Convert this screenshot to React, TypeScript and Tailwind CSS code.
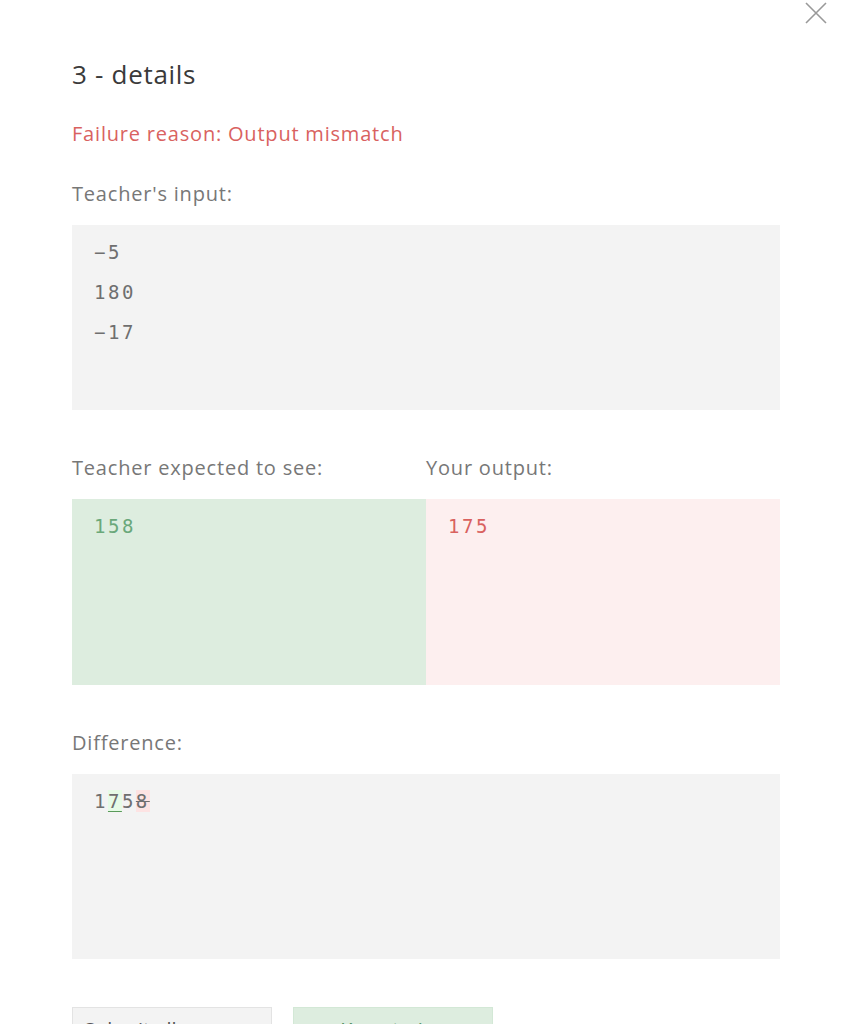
import React from 'react';

const mono = "font-['DejaVu_Sans_Mono',monospace] text-[19px] leading-[40px] tracking-[2.5px]";
const label = "text-[20px] leading-[28px] tracking-[0.8px] text-[#777]";

const App = () => {
    return (
        <div className="relative min-h-screen w-full bg-white font-['Open_Sans',sans-serif]">
            {/* Close */}
            <button className="absolute right-[20px] top-[2px] p-0 text-[#999]">
                <svg width="22" height="22" viewBox="0 0 22 22" fill="none" stroke="currentColor" strokeWidth="1.6">
                    <path d="M1 1 L21 21 M21 1 L1 21" />
                </svg>
            </button>

            <div className="ml-[72px] w-[708px] pt-[56px]">
                <h1 className="text-[26px] leading-[36px] tracking-[0.7px] text-[#3a3a3a]">3 - details</h1>

                <p className="mt-[28px] text-[20px] leading-[28px] tracking-[0.8px] text-[#d9625f]">
                    Failure reason: Output mismatch
                </p>

                <p className={`mt-[32px] ${label}`}>Teacher's input:</p>
                <div className={`mt-[17px] h-[185px] bg-[#f3f3f3] px-[22px] pt-[7px] text-[#6f6f6f] ${mono}`}>
                    <div>−5</div>
                    <div>180</div>
                    <div>−17</div>
                </div>

                {/* Expected / actual */}
                <div className="mt-[44px] grid grid-cols-2">
                    <div>
                        <p className={label}>Teacher expected to see:</p>
                        <div className={`mt-[17px] h-[186px] bg-[#ddeddf] px-[22px] pt-[7px] text-[#6aa87a] ${mono}`}>
                            158
                        </div>
                    </div>
                    <div>
                        <p className={label}>Your output:</p>
                        <div className={`mt-[17px] h-[186px] bg-[#fdefef] px-[22px] pt-[7px] text-[#d9625f] ${mono}`}>
                            175
                        </div>
                    </div>
                </div>

                <p className={`mt-[44px] ${label}`}>Difference:</p>
                <div className={`mt-[17px] h-[185px] bg-[#f3f3f3] px-[22px] pt-[7px] text-[#6f6f6f] ${mono}`}>
                    <span>1</span>
                    <span className="bg-[#e6fbe6] underline decoration-[#5a9a5a] underline-offset-[3px]">7</span>
                    <span>5</span>
                    <span className="bg-[#fde3e3] line-through">8</span>
                </div>

                {/* Buttons */}
                <div className="mt-[48px] flex gap-[21px]">
                    <button className="h-[44px] w-[200px] border border-[#e3e3e3] bg-[#f3f3f3] px-[11px] pt-[2px] text-left text-[20px] leading-[28px] text-[#555]">
                        Submit all
                    </button>
                    <button className="h-[44px] w-[200px] border border-[#d3e8d6] bg-[#ddeddf] pt-[2px] text-center text-[20px] leading-[28px] text-[#4f8f5f]">
                        Keep trying
                    </button>
                </div>
            </div>
        </div>
    );
};

export default App;
